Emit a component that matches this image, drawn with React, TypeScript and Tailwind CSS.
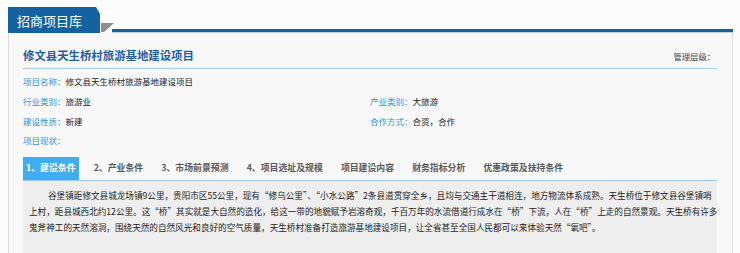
const fields = [
  { label: "行业类别：", value: "旅游业", rLabel: "产业类别：", rValue: "大旅游", h: "h-[19px]" },
  { label: "建设性质：", value: "新建", rLabel: "合作方式：", rValue: "合资，合作", h: "h-[19.5px]" },
];

const tabs = ["2、产业条件", "3、市场前景预测", "4、项目选址及规模", "项目建设内容", "财务指标分析", "优惠政策及扶持条件"];

export default function App() {
  return (
    <div className="h-[253px] w-[740px] overflow-hidden bg-[#fcfcfc] font-['Noto_Sans_CJK_SC',sans-serif]">
      <div className="flex items-end pl-[8px] pt-[7px]">
        <div className="flex h-[26px] w-[92px] items-center bg-[#14629f] pl-[9px] text-[13px] leading-none text-white [clip-path:polygon(0_0,88px_0,100%_7px,100%_100%,0_100%)]">
          招商项目库
        </div>
        <div className="relative flex-1">
          <svg className="absolute bottom-[1px] left-[1px]" width="13" height="9" viewBox="0 0 13 9">
            <polygon points="0,0 13,0 3,9 0,9" fill="#8c8c8c" />
          </svg>
          <div className="ml-[12px] mr-[7px] h-[4px] border-b border-[#b9d0e6] bg-[#14629f]" />
        </div>
      </div>

      <div className="ml-[8px] w-[725px] border-x border-[#dddddd] bg-[#f8f8f8] pl-[14px] pr-[15px]">
        <div className="flex h-[36px] items-center justify-between border-b border-[#a9c9e6] pt-[11px]">
          <h1 className="text-[11.4px] font-bold text-[#1f5ea6]">修文县天生桥村旅游基地建设项目</h1>
          <span className="mr-[2px] text-[8.3px] text-[#444]">管理层级：</span>
        </div>

        <div className="pt-[2px] text-[8.5px] leading-none">
          <div className="flex h-[21px] items-center">
            <span className="text-[#2f93e6]">项目名称：</span>
            <span className="text-[#222]">修文县天生桥村旅游基地建设项目</span>
          </div>
          {fields.map((f) => (
            <div key={f.label} className={`grid grid-cols-[347px_1fr] items-center ${f.h}`}>
              <div>
                <span className="text-[#2f93e6]">{f.label}</span>
                <span className="text-[#222]">{f.value}</span>
              </div>
              <div>
                <span className="text-[#2f93e6]">{f.rLabel}</span>
                <span className="text-[#222]">{f.rValue}</span>
              </div>
            </div>
          ))}
          <div className="flex h-[19px] items-center">
            <span className="text-[#2f93e6]">项目现状：</span>
          </div>
        </div>

        <div className="mt-[7px] flex h-[24px] items-stretch gap-[12px] border-b border-[#9fc3e4] text-[8.9px] font-bold">
          <span className="flex items-center bg-[#41acef] px-[3px] text-white">1、建设条件</span>
          {tabs.map((t) => (
            <span key={t} className="flex items-center px-[3px] text-[#5a5a5a]">
              {t}
            </span>
          ))}
        </div>

        <div className="h-[80px] bg-[#eeeeee] pl-[6px] pt-[6px]">
          <p className="whitespace-nowrap indent-[19px] text-[8.6px] leading-[16.3px] text-[#222]">
            谷堡镇距修文县城龙场镇9公里，贵阳市区55公里，现有“修乌公里”、“小水公路”2条县道贯穿全乡，且均与交通主干道相连，地方物流体系成熟。天生桥位于修文县谷堡镇哨
            <br />
            上村，距县城西北约12公里。这“桥”其实就是大自然的造化，给这一带的地貌赋予岩溶奇观，千百万年的水流借道行成水在“桥”下流，人在“桥”上走的自然景观。天生桥有许多
            <br />
            鬼斧神工的天然溶洞，围绕天然的自然风光和良好的空气质量，天生桥村准备打造旅游基地建设项目，让全省甚至全国人民都可以来体验天然“氧吧”。
          </p>
        </div>
      </div>
    </div>
  );
}
